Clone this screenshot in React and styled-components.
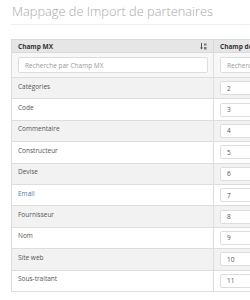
import React from 'react';
import styled, { createGlobalStyle } from 'styled-components';

const ROWS = [
  { label: 'Catégories', value: '2' },
  { label: 'Code', value: '3' },
  { label: 'Commentaire', value: '4' },
  { label: 'Constructeur', value: '5' },
  { label: 'Devise', value: '6' },
  { label: 'Email', value: '7', link: true },
  { label: 'Fournisseur', value: '8' },
  { label: 'Nom', value: '9' },
  { label: 'Site web', value: '10' },
  { label: 'Sous-traitant', value: '11' },
];

const GlobalStyle = createGlobalStyle`
  body {
    margin: 0;
    background: #fff;
    font-family: "Open Sans", "Liberation Sans", sans-serif;
  }
`;

const Page = styled.div`
  width: 250px;
  height: 300px;
  overflow: hidden;
  padding-left: 11px;
  box-sizing: border-box;
`;

const Title = styled.h1`
  margin: 0;
  padding: 4px 0 5px 1px;
  font-size: 12.8px;
  line-height: 15px;
  font-weight: 300;
  color: #a9a9a9;
  white-space: nowrap;
  border-bottom: 1px solid #eee;
`;

const Table = styled.table`
  margin-top: 14px;
  width: 322px;
  table-layout: fixed;
  border-collapse: collapse;
  font-size: 6.5px;
  color: #555;
`;

const HeadCell = styled.th`
  height: 12px;
  padding: 0 6px;
  text-align: left;
  font-weight: 700;
  color: #333;
  background: #e6e6e6;
  border: 1px solid #d9d9d9;
  white-space: nowrap;
  overflow: hidden;
`;

const HeadInner = styled.div`
  display: flex;
  align-items: center;
  justify-content: space-between;
`;

const FilterCell = styled.td`
  height: 24px;
  padding: 0 5px 0 6px;
  background: #f7f7f7;
  border: 1px solid #ddd;
  overflow: hidden;
`;

const Row = styled.tr`
  background: ${(p) => (p.$odd ? '#f2f2f2' : '#fff')};
`;

const Cell = styled.td`
  height: 20.4px;
  padding: 0 6px;
  border: 1px solid #ddd;
  white-space: nowrap;
  overflow: hidden;
  color: ${(p) => (p.$link ? '#4f78a8' : '#555')};
  vertical-align: middle;
`;

const LabelText = styled.span`
  position: relative;
  top: -2px;
`;

const TextBox = styled.input`
  display: block;
  box-sizing: border-box;
  width: 100%;
  height: ${(p) => p.$height || '16px'};
  padding: 0 6px;
  border: 1px solid #ddd;
  border-radius: 2px;
  background: #fff;
  font-family: inherit;
  font-size: 6.5px;
  color: #555;
  outline: none;

  &::placeholder {
    color: #9a9a9a;
  }
`;

const SortIcon = () => (
  <svg width="7" height="7" viewBox="0 0 14 14">
    <rect x="2" y="0" width="2" height="10" fill="#555" />
    <path d="M0 9 L6 9 L3 13 Z" fill="#555" />
    <rect x="8" y="1" width="5" height="4" fill="#777" />
    <rect x="8" y="8" width="5" height="5" fill="#777" />
  </svg>
);

export default function App() {
  return (
    <>
      <GlobalStyle />
      <Page>
        <Title>Mappage de Import de partenaires</Title>
        <Table>
          <colgroup>
            <col style={{ width: 202 }} />
            <col style={{ width: 120 }} />
          </colgroup>
          <thead>
            <tr>
              <HeadCell>
                <HeadInner>
                  <span>Champ MX</span>
                  <SortIcon />
                </HeadInner>
              </HeadCell>
              <HeadCell>Champ de fichier</HeadCell>
            </tr>
            <tr>
              <FilterCell>
                <TextBox placeholder="Recherche par Champ MX" />
              </FilterCell>
              <FilterCell>
                <TextBox placeholder="Recherche par Champ de fichier" />
              </FilterCell>
            </tr>
          </thead>
          <tbody>
            {ROWS.map((row, i) => (
              <Row key={row.label} $odd={i % 2 === 0}>
                <Cell $link={row.link}>
                  <LabelText>{row.label}</LabelText>
                </Cell>
                <Cell>
                  <TextBox defaultValue={row.value} $height="14px" />
                </Cell>
              </Row>
            ))}
          </tbody>
        </Table>
      </Page>
    </>
  );
}
